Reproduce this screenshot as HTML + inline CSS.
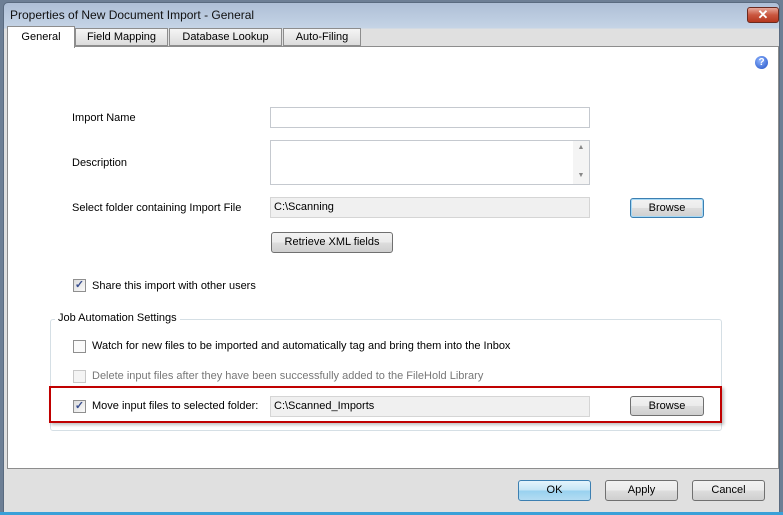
<!DOCTYPE html>
<html><head><style>
*{box-sizing:border-box}
body{margin:0;width:783px;height:515px;overflow:hidden;background:#fff;font-family:"Liberation Sans",sans-serif;font-size:11px;color:#000;position:relative}
.a{position:absolute}
.btn{position:absolute;border:1px solid #707070;border-radius:3px;background:linear-gradient(#f2f2f2,#ebebeb 50%,#dddddd 51%,#cfcfcf);text-align:center;line-height:18px;font-size:11px}
.inp{position:absolute;border:1px solid #c5c9cf;background:#fff}
.ro{background:#f0f0f0;border-color:#d5d5d5;padding-left:3px;line-height:18px}
.cb{position:absolute;width:13px;height:13px;border:1px solid #8f8f8f;background:linear-gradient(135deg,#dcdcdc,#fafafa);font-size:11px;line-height:11px;text-align:center;color:#3a4f8f;font-weight:bold}
</style></head><body>
<div class="a" style="left:0;top:0;width:783px;height:515px;background:#6d7f95"></div>
<div class="a" style="left:3px;top:2px;width:777px;height:510px;background:linear-gradient(#aebfd6,#c5d4e6 25px,#e0e0e0 26px);border:1px solid #5a6b80;border-radius:5px 5px 0 0"></div>
<div class="a" style="left:10px;top:8px;font-size:12px;color:#111">Properties of New Document Import - General</div>
<div class="a" style="left:747px;top:7px;width:32px;height:16px;border:1px solid #6b2a1f;border-radius:3px;background:linear-gradient(#e8a89a,#c9563f 50%,#b5381f);color:#fff;font-weight:bold;text-align:center;line-height:14px;font-size:13px">✕</div>
<!-- tabs -->
<div class="a" style="left:75px;top:28px;width:93px;height:18px;border:1px solid #8d8d8d;background:linear-gradient(#f5f5f5,#dcdcdc);text-align:center;line-height:17px">Field Mapping</div>
<div class="a" style="left:169px;top:28px;width:113px;height:18px;border:1px solid #8d8d8d;background:linear-gradient(#f5f5f5,#dcdcdc);text-align:center;line-height:17px">Database Lookup</div>
<div class="a" style="left:283px;top:28px;width:78px;height:18px;border:1px solid #8d8d8d;background:linear-gradient(#f5f5f5,#dcdcdc);text-align:center;line-height:17px">Auto-Filing</div>
<div class="a" style="left:7px;top:46px;width:772px;height:423px;background:#fff;border:1px solid #8d8d8d"></div>
<div class="a" style="left:7px;top:26px;width:68px;height:22px;background:#fff;border:1px solid #8d8d8d;border-bottom:none;text-align:center;line-height:20px">General</div>
<div class="a" style="left:755px;top:56px;width:13px;height:13px;border-radius:50%;background:radial-gradient(circle at 40% 35%,#8fb5ff,#1f4fc4);color:#fff;font-weight:bold;font-size:10px;line-height:13px;text-align:center">?</div>
<div class="a" style="left:72px;top:112px">Import Name</div>
<div class="inp" style="left:270px;top:107px;width:320px;height:21px"></div>
<div class="a" style="left:72px;top:157px">Description</div>
<div class="inp" style="left:270px;top:140px;width:320px;height:45px"><div class="a" style="right:0;top:0;width:16px;height:43px;background:#f4f4f4;color:#888;font-size:7px;text-align:center;line-height:14px">▲<br><br>▼</div></div>
<div class="a" style="left:72px;top:202px">Select folder containing Import File</div>
<div class="inp ro" style="left:270px;top:197px;width:320px;height:21px">C:\Scanning</div>
<div class="btn" style="left:630px;top:198px;width:74px;height:20px;border-color:#3c7fb1;box-shadow:inset 0 0 0 1px #a7d9f5">Browse</div>
<div class="btn" style="left:271px;top:232px;width:122px;height:21px">Retrieve XML fields</div>
<div class="cb" style="left:73px;top:279px">✓</div>
<div class="a" style="left:92px;top:280px">Share this import with other users</div>
<div class="a" style="left:50px;top:319px;width:672px;height:112px;border:1px solid #d5dfe5;border-radius:3px"></div>
<div class="a" style="left:55px;top:312px;background:#fff;padding:0 3px">Job Automation Settings</div>
<div class="cb" style="left:73px;top:340px;background:#fafafa"></div>
<div class="a" style="left:92px;top:340px">Watch for new files to be imported and automatically tag and bring them into the Inbox</div>
<div class="cb" style="left:73px;top:370px;border-color:#c8c8c8;background:#f4f4f4"></div>
<div class="a" style="left:92px;top:370px;color:#777">Delete input files after they have been successfully added to the FileHold Library</div>
<div class="a" style="left:49px;top:386px;width:673px;height:37px;border:2px solid #c00000;box-shadow:2px 2px 3px rgba(0,0,0,.25)"></div>
<div class="cb" style="left:73px;top:400px">✓</div>
<div class="a" style="left:92px;top:400px">Move input files to selected folder:</div>
<div class="inp ro" style="left:270px;top:396px;width:320px;height:21px">C:\Scanned_Imports</div>
<div class="btn" style="left:630px;top:396px;width:74px;height:20px">Browse</div>
<div class="a" style="left:4px;top:469px;width:775px;height:43px;background:#e0e0e0"></div>
<div class="btn" style="left:518px;top:480px;width:73px;height:21px;border-color:#3c7fb1;background:linear-gradient(#e5f4fc,#c4e5f6 50%,#98d1ef 51%,#b3dcf2)">OK</div>
<div class="btn" style="left:605px;top:480px;width:73px;height:21px">Apply</div>
<div class="btn" style="left:692px;top:480px;width:73px;height:21px">Cancel</div>
<div class="a" style="left:0;top:512px;width:783px;height:3px;background:#3aa0d8"></div>
</body></html>
